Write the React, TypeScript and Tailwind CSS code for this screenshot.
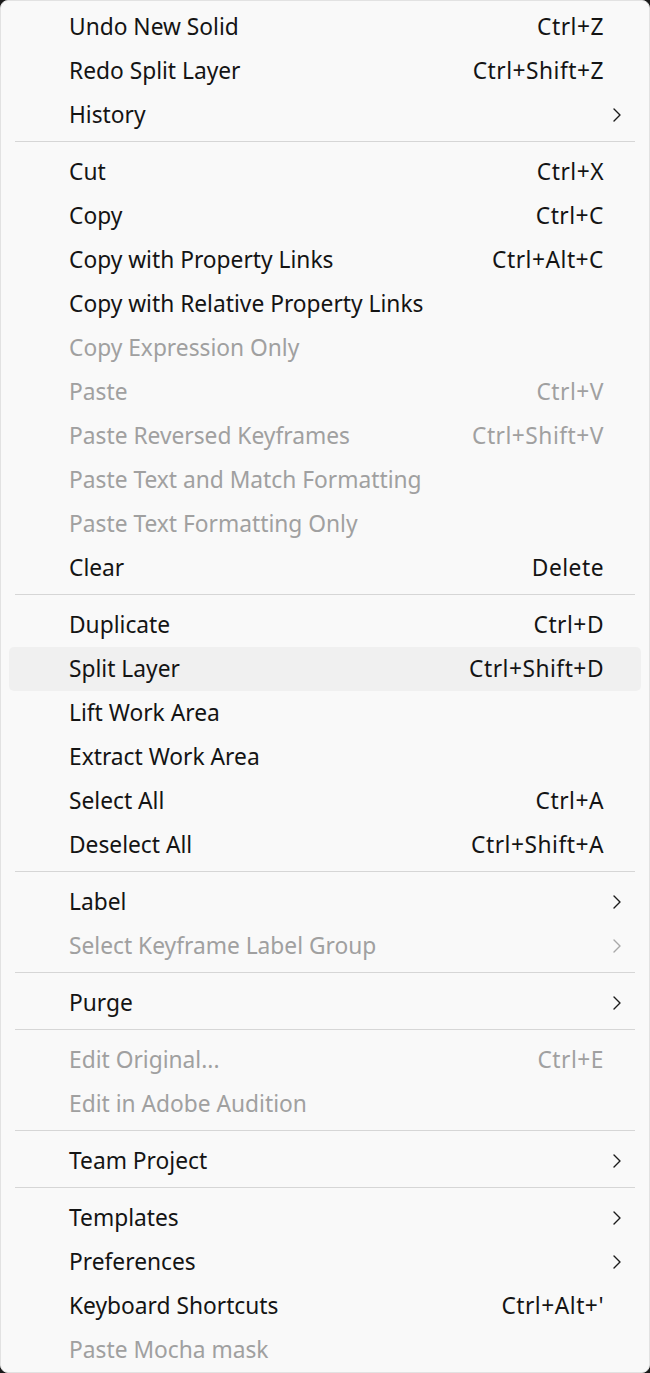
import React from "react";

type Item =
  | { type: "sep" }
  | { type: "item"; label: string; shortcut?: string; sub?: boolean; disabled?: boolean; hover?: boolean };

const items: Item[] = [
  { type: "item", label: "Undo New Solid", shortcut: "Ctrl+Z" },
  { type: "item", label: "Redo Split Layer", shortcut: "Ctrl+Shift+Z" },
  { type: "item", label: "History", sub: true },
  { type: "sep" },
  { type: "item", label: "Cut", shortcut: "Ctrl+X" },
  { type: "item", label: "Copy", shortcut: "Ctrl+C" },
  { type: "item", label: "Copy with Property Links", shortcut: "Ctrl+Alt+C" },
  { type: "item", label: "Copy with Relative Property Links" },
  { type: "item", label: "Copy Expression Only", disabled: true },
  { type: "item", label: "Paste", shortcut: "Ctrl+V", disabled: true },
  { type: "item", label: "Paste Reversed Keyframes", shortcut: "Ctrl+Shift+V", disabled: true },
  { type: "item", label: "Paste Text and Match Formatting", disabled: true },
  { type: "item", label: "Paste Text Formatting Only", disabled: true },
  { type: "item", label: "Clear", shortcut: "Delete" },
  { type: "sep" },
  { type: "item", label: "Duplicate", shortcut: "Ctrl+D" },
  { type: "item", label: "Split Layer", shortcut: "Ctrl+Shift+D", hover: true },
  { type: "item", label: "Lift Work Area" },
  { type: "item", label: "Extract Work Area" },
  { type: "item", label: "Select All", shortcut: "Ctrl+A" },
  { type: "item", label: "Deselect All", shortcut: "Ctrl+Shift+A" },
  { type: "sep" },
  { type: "item", label: "Label", sub: true },
  { type: "item", label: "Select Keyframe Label Group", sub: true, disabled: true },
  { type: "sep" },
  { type: "item", label: "Purge", sub: true },
  { type: "sep" },
  { type: "item", label: "Edit Original...", shortcut: "Ctrl+E", disabled: true },
  { type: "item", label: "Edit in Adobe Audition", disabled: true },
  { type: "sep" },
  { type: "item", label: "Team Project", sub: true },
  { type: "sep" },
  { type: "item", label: "Templates", sub: true },
  { type: "item", label: "Preferences", sub: true },
  { type: "item", label: "Keyboard Shortcuts", shortcut: "Ctrl+Alt+'" },
  { type: "item", label: "Paste Mocha mask", disabled: true },
];

function Chevron({ disabled }: { disabled?: boolean }) {
  return (
    <svg width="10" height="16" viewBox="0 0 10 16" className="block">
      <polyline
        points="2,2 8,8 2,14"
        fill="none"
        stroke={disabled ? "#a8a8a8" : "#1b1b1b"}
        strokeWidth="1.4"
        strokeLinecap="round"
        strokeLinejoin="round"
      />
    </svg>
  );
}

export default function App() {
  return (
    <div className="w-[650px] h-[1373px] bg-[#1a1a1a]" style={{ fontFamily: '"Noto Sans", "Open Sans", sans-serif' }}>
      <div className="h-full rounded-[8px] border border-[#e2e2e2] bg-[#f9f9f9] pt-[4px] px-[8px] overflow-hidden">
        {items.map((it, i) =>
          it.type === "sep" ? (
            <div key={i} className="pt-[4px] pb-[8px]">
              <div className="mx-[6px] h-px bg-[#d6d6d6]" />
            </div>
          ) : (
            <div
              key={i}
              className={
                "h-[44px] flex items-center pl-[60px] pr-[19px] rounded-[5px] text-[22.75px] leading-none " +
                (it.hover ? "bg-[#f0f0f0] " : "") +
                (it.disabled ? "text-[#a0a0a0]" : "text-[#141414]")
              }
            >
              <span className="flex-1 whitespace-nowrap">{it.label}</span>
              {it.shortcut && <span className="whitespace-nowrap tracking-[0.5px]">{it.shortcut}</span>}
              <span className="w-[18px] flex justify-end">{it.sub && <Chevron disabled={it.disabled} />}</span>
            </div>
          )
        )}
      </div>
    </div>
  );
}
